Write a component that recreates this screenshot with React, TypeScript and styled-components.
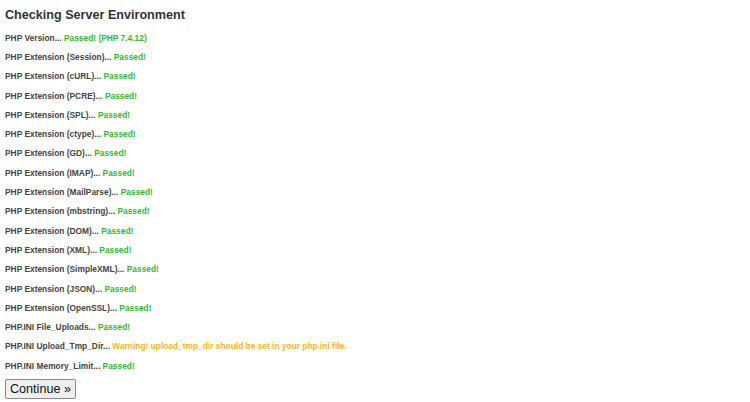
import React from 'react'
import styled, { createGlobalStyle } from 'styled-components'

const GlobalStyle = createGlobalStyle`
  body {
    margin: 0;
    padding: 5px;
    background: #fff;
    font-family: "Liberation Sans", Arial, sans-serif;
    color: #333;
  }
`

const Title = styled.h1`
  font-size: 12.6px;
  font-weight: bold;
  margin: 3px 0 6px;
  color: #333;
`

const CheckList = styled.div`
  display: flex;
  flex-direction: column;
`

const CheckRow = styled.div`
  height: 19.3px;
  display: flex;
  align-items: center;
  font-size: 8.4px;
  font-weight: bold;
  color: #444;
  white-space: pre;
`

const Status = styled.span<{ $warn?: boolean }>`
  color: ${(p) => (p.$warn ? '#f5b31e' : '#2dbb2d')};
`

const ContinueButton = styled.button`
  display: block;
  margin-top: 4px;
  font-family: "Liberation Sans", Arial, sans-serif;
  font-size: 12.6px;
  color: #111;
  padding: 2px 4px;
  background: #efefef;
  border: 1px solid #8a8a8a;
  border-radius: 2px;
`

type Check = { label: string; status: string; warn?: boolean }

const checks: Check[] = [
  { label: 'PHP Version...', status: 'Passed! (PHP 7.4.12)' },
  { label: 'PHP Extension (Session)...', status: 'Passed!' },
  { label: 'PHP Extension (cURL)...', status: 'Passed!' },
  { label: 'PHP Extension (PCRE)...', status: 'Passed!' },
  { label: 'PHP Extension (SPL)...', status: 'Passed!' },
  { label: 'PHP Extension (ctype)...', status: 'Passed!' },
  { label: 'PHP Extension (GD)...', status: 'Passed!' },
  { label: 'PHP Extension (IMAP)...', status: 'Passed!' },
  { label: 'PHP Extension (MailParse)...', status: 'Passed!' },
  { label: 'PHP Extension (mbstring)...', status: 'Passed!' },
  { label: 'PHP Extension (DOM)...', status: 'Passed!' },
  { label: 'PHP Extension (XML)...', status: 'Passed!' },
  { label: 'PHP Extension (SimpleXML)...', status: 'Passed!' },
  { label: 'PHP Extension (JSON)...', status: 'Passed!' },
  { label: 'PHP Extension (OpenSSL)...', status: 'Passed!' },
  { label: 'PHP.INI File_Uploads...', status: 'Passed!' },
  {
    label: 'PHP.INI Upload_Tmp_Dir...',
    status: 'Warning! upload_tmp_dir should be set in your php.ini file.',
    warn: true,
  },
  { label: 'PHP.INI Memory_Limit...', status: 'Passed!' },
]

export default function App() {
  return (
    <>
      <GlobalStyle />
      <Title>Checking Server Environment</Title>
      <CheckList>
        {checks.map((c) => (
          <CheckRow key={c.label}>
            {c.label} <Status $warn={c.warn}>{c.status}</Status>
          </CheckRow>
        ))}
      </CheckList>
      <ContinueButton>Continue »</ContinueButton>
    </>
  )
}
